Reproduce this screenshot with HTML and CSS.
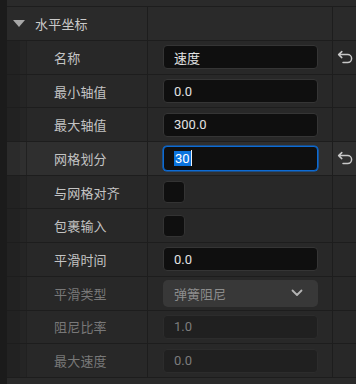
FILE: index.html
```html
<!DOCTYPE html>
<html>
  <head>
    <link rel="stylesheet" href="styles.css">
  </head>
  <body>
    <div class="panel">
      <div class="gutter"></div>
      <div class="sheet">
        <div class="topband"></div>
        <div class="header">
          <div class="head-title"><span class="tri"></span>水平坐标</div>
          <div class="value"></div>
          <div class="reset"></div>
        </div>

        <div class="row">
          <div class="indent"></div>
          <div class="label">名称</div>
          <div class="value"><div class="field">速度</div></div>
          <div class="reset">
            <svg width="16" height="14" viewBox="0 0 16 14"><path d="M4.8 1.6 L1.6 4.6 L4.8 7.6 M1.6 4.6 H10.6 A4 4 0 0 1 10.6 12.6 H6" fill="none" stroke="#c8c8c8" stroke-width="1.5" stroke-linecap="round" stroke-linejoin="round"/></svg>
          </div>
        </div>
        <div class="row">
          <div class="indent"></div>
          <div class="label">最小轴值</div>
          <div class="value"><div class="field">0.0</div></div>
          <div class="reset"></div>
        </div>
        <div class="row">
          <div class="indent"></div>
          <div class="label">最大轴值</div>
          <div class="value"><div class="field">300.0</div></div>
          <div class="reset"></div>
        </div>
        <div class="row hover">
          <div class="indent"></div>
          <div class="label">网格划分</div>
          <div class="value"><div class="field focus"><span class="sel">30</span><span class="caret"></span></div></div>
          <div class="reset">
            <svg width="16" height="14" viewBox="0 0 16 14"><path d="M4.8 1.6 L1.6 4.6 L4.8 7.6 M1.6 4.6 H10.6 A4 4 0 0 1 10.6 12.6 H6" fill="none" stroke="#c8c8c8" stroke-width="1.5" stroke-linecap="round" stroke-linejoin="round"/></svg>
          </div>
        </div>
        <div class="row">
          <div class="indent"></div>
          <div class="label">与网格对齐</div>
          <div class="value"><div class="check"></div></div>
          <div class="reset"></div>
        </div>
        <div class="row">
          <div class="indent"></div>
          <div class="label">包裹输入</div>
          <div class="value"><div class="check"></div></div>
          <div class="reset"></div>
        </div>
        <div class="row">
          <div class="indent"></div>
          <div class="label">平滑时间</div>
          <div class="value"><div class="field">0.0</div></div>
          <div class="reset"></div>
        </div>
        <div class="row">
          <div class="indent"></div>
          <div class="label off">平滑类型</div>
          <div class="value">
            <div class="combo">
              <span>弹簧阻尼</span>
              <svg width="12" height="8" viewBox="0 0 12 8"><path d="M1.5 1.5 L6 6 L10.5 1.5" fill="none" stroke="#b4b4b4" stroke-width="1.8" stroke-linecap="round" stroke-linejoin="round"/></svg>
            </div>
          </div>
          <div class="reset"></div>
        </div>
        <div class="row">
          <div class="indent"></div>
          <div class="label off">阻尼比率</div>
          <div class="value"><div class="field disabled">1.0</div></div>
          <div class="reset"></div>
        </div>
        <div class="row">
          <div class="indent"></div>
          <div class="label off">最大速度</div>
          <div class="value"><div class="field disabled">0.0</div></div>
          <div class="reset"></div>
        </div>

        <div class="footband"></div>
      </div>
    </div>
  </body>
</html>
```

FILE: styles.css
```css
html, body {
  margin: 0;
  height: 100%;
  overflow: hidden;
}
body {
  background-color: #1b1b1b;
  font-family: Roboto, "Noto Sans CJK SC", sans-serif;
  font-size: 13px;
  color: #c4c4c4;
}
.panel {
  display: flex;
  height: 100%;
}
.gutter {
  width: 7px;
  flex: none;
  background-color: #1b1b1b;
}
.sheet {
  flex: 1;
  display: flex;
  flex-direction: column;
}
.topband {
  height: 7px;
  flex: none;
  box-sizing: border-box;
  background-color: #2a2a2a;
  border-bottom: 1px solid #1d1d1d;
}
.header, .row {
  display: grid;
  flex: none;
  box-sizing: border-box;
  border-bottom: 1px solid #1d1d1d;
}
.header {
  grid-template-columns: 140px 185px 24px;
  height: 34px;
  background-color: #2a2a2a;
}
.head-title {
  display: flex;
  align-items: center;
  padding-left: 6px;
  color: #cacaca;
  letter-spacing: 0.2px;
}
.tri {
  width: 0;
  height: 0;
  border-left: 6px solid transparent;
  border-right: 6px solid transparent;
  border-top: 7px solid #a8a8a8;
  margin-right: 10px;
}
.row {
  grid-template-columns: 20px 120px 185px 24px;
  height: 33.7px;
  background-color: #282828;
}
.row.hover {
  background-color: #2f2f2f;
}
.indent {
  background: linear-gradient(to right, #222 13px, #252525 13px);
  border-right: 1px solid #212121;
}
.row.hover .indent {
  background: linear-gradient(to right, #2b2b2b 13px, #2f2f2f 13px);
}
.label {
  display: flex;
  align-items: center;
  padding-left: 27px;
  color: #c4c4c4;
  letter-spacing: 0.2px;
}
.label.off {
  color: #787878;
}
.value {
  display: flex;
  align-items: center;
  border-left: 1px solid #1d1d1d;
  padding-left: 15px;
}
.reset {
  display: flex;
  align-items: center;
  justify-content: center;
  border-left: 1px solid #1d1d1d;
  padding-left: 1px;
}
.field {
  box-sizing: border-box;
  width: 155px;
  height: 24px;
  display: flex;
  align-items: center;
  padding-left: 10px;
  background-color: #0f0f0f;
  border: 1px solid #353535;
  border-radius: 4px;
  color: #e2e2e2;
}
.field.focus {
  height: 25px;
  border-color: #0d6bd4;
  box-shadow: 0 0 0 0.6px #0d6bd4;
}
.field.disabled {
  background-color: #202020;
  border-color: #2c2c2c;
  color: #7c7c7c;
}
.sel {
  background-color: #0b74de;
  color: #fff;
  line-height: 15px;
  padding: 0 1px;
}
.caret {
  width: 1px;
  height: 16px;
  background-color: #f0f0f0;
}
.check {
  box-sizing: border-box;
  width: 22px;
  height: 22px;
  background-color: #0f0f0f;
  border: 1px solid #333;
  border-radius: 4px;
}
.combo {
  box-sizing: border-box;
  width: 155px;
  height: 27px;
  display: flex;
  align-items: center;
  justify-content: space-between;
  padding: 0 15px 0 11px;
  background-color: #383838;
  border-radius: 5px;
  color: #8c8c8c;
}
.footband {
  flex: 1;
  background-color: #2a2a2a;
}
```
